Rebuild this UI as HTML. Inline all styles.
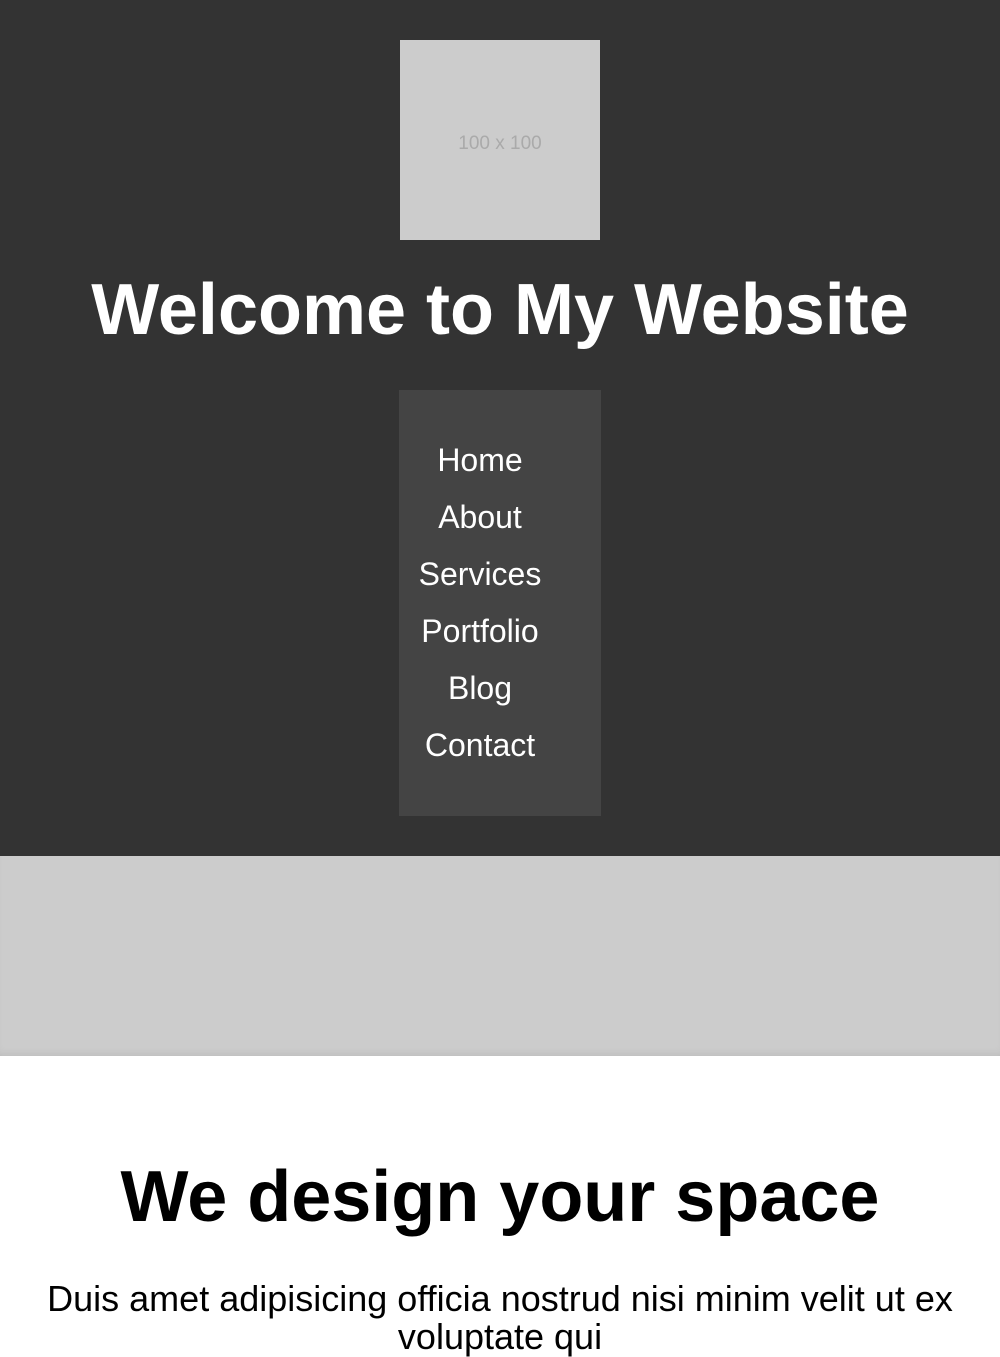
<!DOCTYPE html>
<html><head><style>
*{margin:0;padding:0}
body{width:1000px;height:1342px;overflow:hidden;font-family:"Liberation Sans",Arial,sans-serif;background:#fff}
header{position:relative;height:856px;background:#333}
.logo{position:absolute;left:400px;top:40px;width:200px;height:200px;background:#ccc;color:#aaa;font-size:19px;text-align:center;line-height:208px}
h1{position:absolute;top:264px;left:0;width:1000px;text-align:center;color:#fff;font-size:72px;font-weight:bold;line-height:92px}
nav{position:absolute;left:399px;top:390px;width:202px;height:426px;background:#444}
nav div{position:absolute;left:0;width:162px;text-align:center;color:#fff;font-size:32px;line-height:40px}
.gray{height:200px;background:#ccc;box-shadow:inset 0 -6px 8px -4px rgba(0,0,0,.08)}
h2{position:absolute;top:1152px;left:0;width:1000px;text-align:center;font-size:72px;font-weight:bold;line-height:90px}
p{position:absolute;top:1280px;left:30px;width:940px;text-align:center;font-size:36px;line-height:38px}
</style></head><body>
<header>
<div class="logo">100 x 100</div>
<h1>Welcome to My Website</h1>
<nav>
<div style="top:50px">Home</div>
<div style="top:107px">About</div>
<div style="top:164px">Services</div>
<div style="top:221px">Portfolio</div>
<div style="top:278px">Blog</div>
<div style="top:335px">Contact</div>
</nav>
</header>
<div class="gray"></div>
<h2>We design your space</h2>
<p>Duis amet adipisicing officia nostrud nisi minim velit ut ex voluptate qui</p>
</body></html>
